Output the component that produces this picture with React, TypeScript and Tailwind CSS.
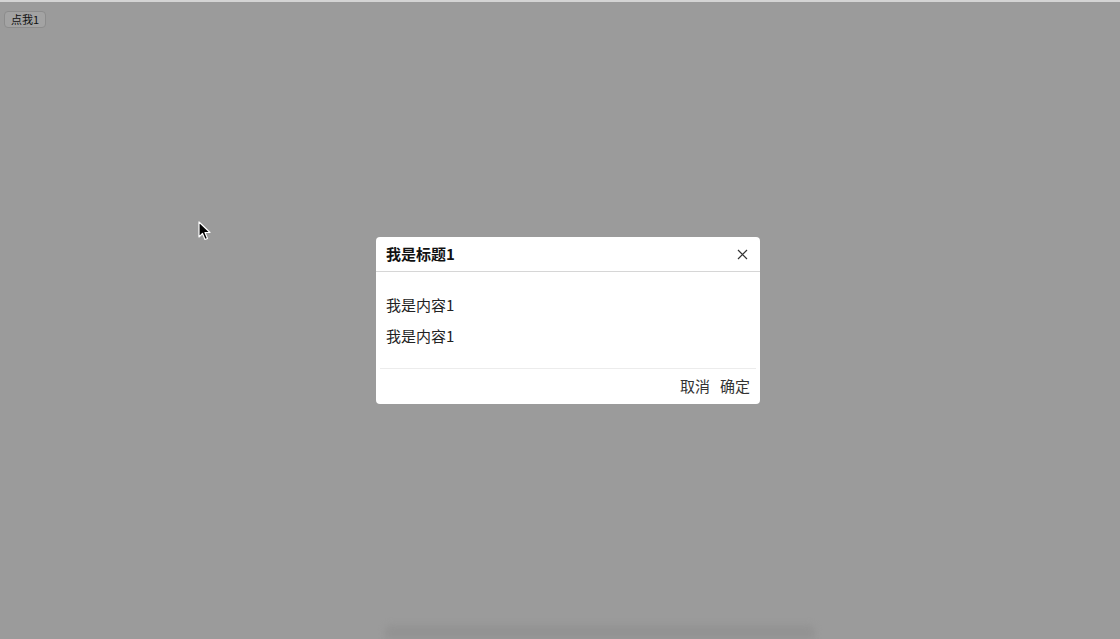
import { useState } from 'react'

const FONT = '"Noto Sans CJK SC", "Noto Sans", sans-serif'

export default function App() {
  const [open, setOpen] = useState(true)

  return (
    <div
      className="relative h-[639px] w-full overflow-hidden border-t-2 border-[#d4d4d4] bg-[#9b9b9b]"
      style={{ fontFamily: FONT }}
    >
      {/* Trigger */}
      <div className="flex px-[4px] pt-[9px]">
        <button
          type="button"
          onClick={() => setOpen(true)}
          className="h-[17px] rounded-[4px] border border-[#8c8c8c] bg-[#a3a3a3] px-[6px] text-[11px] leading-[15px] text-[#111]"
        >
          点我1
        </button>
      </div>

      {/* Dock blur at bottom */}
      <div className="absolute bottom-0 left-[385px] h-[14px] w-[430px] rounded-t-[6px] bg-[#939393] blur-[3px]" />

      {/* Cursor */}
      <svg className="absolute left-[198px] top-[219px]" width="14" height="20" viewBox="0 0 14 20">
        <path d="M1 1 L1 16 L4.5 12.5 L7 18.5 L9.5 17.5 L7 11.5 L12 11.5 Z" fill="#000" stroke="#fff" strokeWidth="1.2" strokeLinejoin="round" />
      </svg>

      {/* Modal */}
      {open && (
        <div className="absolute left-[376px] top-[235px] w-[384px] rounded-[4px] bg-white">
          <div className="flex h-[35px] items-center justify-between border-b border-[#d6d6d6] px-[10px]">
            <span className="text-[15px] font-semibold text-[#111]">我是标题1</span>
            <button
              type="button"
              aria-label="关闭"
              onClick={() => setOpen(false)}
              className="flex h-[16px] w-[16px] items-center justify-center text-[#333]"
            >
              <svg width="11" height="11" viewBox="0 0 11 11">
                <path d="M1 1 L10 10 M10 1 L1 10" stroke="currentColor" strokeWidth="1.2" />
              </svg>
            </button>
          </div>

          <div className="flex flex-col gap-[10px] px-[10px] pb-[22px] pt-[22px] text-[15px] leading-[21px] text-[#222]">
            <p>我是内容1</p>
            <p>我是内容1</p>
          </div>

          <div className="mx-[4px] border-t border-[#ececec]" />

          <div className="flex h-[35px] items-center justify-end gap-[10px] px-[10px] text-[15px] text-[#333]">
            <button type="button" onClick={() => setOpen(false)}>取消</button>
            <button type="button" onClick={() => setOpen(false)}>确定</button>
          </div>
        </div>
      )}
    </div>
  )
}
